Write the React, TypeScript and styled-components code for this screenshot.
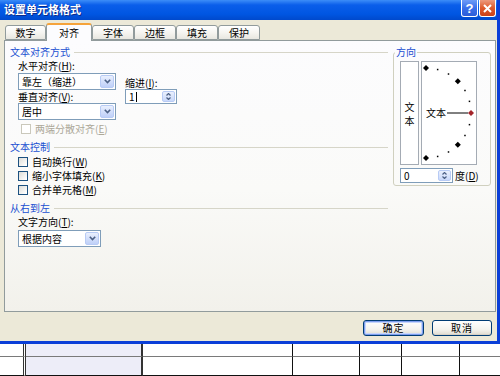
import React from "react";
import styled, { createGlobalStyle } from "styled-components";

const GlobalStyle = createGlobalStyle`
  html, body { margin: 0; padding: 0; width: 500px; height: 376px; overflow: hidden; background: #fff; }
  body { font-family: "Noto Sans CJK SC", "Liberation Sans", sans-serif; font-size: 10px; color: #000; }
  * { box-sizing: border-box; }
  u { text-decoration: underline; }
`;

const Screen = styled.div`
  width: 500px;
  height: 376px;
  display: flex;
  flex-direction: column;
  overflow: hidden;
`;

const Window = styled.div`
  height: 344px;
  display: flex;
  flex-direction: column;
  border-right: 3px solid #0B3FD8;
  border-bottom: 3px solid #0B3FD8;
  background: #ECE9D8;
`;

const TitleBar = styled.div`
  height: 20px;
  flex: 0 0 20px;
  display: flex;
  align-items: flex-start;
  justify-content: space-between;
  padding: 0 1px 0 4px;
  background: linear-gradient(180deg, #3C8DF8 0%, #0A5EEA 25%, #0056E2 70%, #0049CC 100%);
`;

const Title = styled.span`
  color: #fff;
  font-weight: bold;
  font-size: 11px;
  line-height: 12px;
  margin-top: 3px;
  text-shadow: 1px 1px 0 #0A2A8A;
`;

const TitleButtons = styled.div`
  display: flex;
  gap: 1px;
`;

const CaptionButton = styled.div<{ $kind: "help" | "close" }>`
  width: 17px;
  height: 17px;
  border: 1px solid #fff;
  border-top: none;
  border-radius: 0 0 3px 3px;
  display: flex;
  align-items: center;
  justify-content: center;
  color: #fff;
  font-family: "Liberation Sans", sans-serif;
  font-weight: bold;
  font-size: 13px;
  background: ${(p) =>
    p.$kind === "help"
      ? "linear-gradient(180deg, #6E9CF8 0%, #3A6FEA 50%, #2A5CD8 100%)"
      : "linear-gradient(180deg, #EC9A7E 0%, #DF5A2C 50%, #C9421A 100%)"};
`;

const Body = styled.div`
  flex: 1;
  display: flex;
  flex-direction: column;
  padding: 3px 1px 5px 4px;
`;

const TabRow = styled.div`
  display: flex;
  align-items: flex-end;
  height: 17px;
  padding-left: 1px;
  position: relative;
  z-index: 1;
`;

const Tab = styled.div<{ $active?: boolean; $w: number }>`
  width: ${(p) => p.$w}px;
  height: ${(p) => (p.$active ? 18 : 15)}px;
  margin-bottom: ${(p) => (p.$active ? -1 : 0)}px;
  border: 1px solid #919B9C;
  border-bottom: ${(p) => (p.$active ? "none" : "1px solid #919B9C")};
  border-top: ${(p) => (p.$active ? "2px solid #F5A33A" : "1px solid #919B9C")};
  border-radius: 3px 3px 0 0;
  background: ${(p) =>
    p.$active ? "#FCFCFE" : "linear-gradient(180deg, #FFFFFF 0%, #F6F5F1 50%, #E8E7E0 100%)"};
  display: flex;
  align-items: center;
  justify-content: center;
  line-height: 12px;
  font-size: 10px;
`;

const Panel = styled.div`
  height: 272px;
  border: 1px solid #919B9C;
  background: linear-gradient(180deg, #FCFCFE 0%, #FAFAF8 55%, #F2F1EB 100%);
  display: flex;
  align-items: flex-start;
  padding: 5px 4px 0 5px;
`;

const LeftCol = styled.div`
  flex: 0 0 378px;
  margin-right: 5px;
  display: flex;
  flex-direction: column;
`;

const SectionHeader = styled.div<{ $mt?: number }>`
  display: flex;
  align-items: center;
  height: 12px;
  line-height: 12px;
  color: #1A4FD1;
  margin-top: ${(p) => p.$mt ?? 0}px;
  &::after {
    content: "";
    flex: 1;
    height: 1px;
    background: #D6D5C8;
    margin-left: 4px;
  }
`;

const Label = styled.div<{ $mt?: number }>`
  height: 12px;
  line-height: 12px;
  margin-top: ${(p) => p.$mt ?? 0}px;
  white-space: nowrap;
`;

const AlignRow = styled.div`
  display: flex;
  gap: 9px;
  margin-left: 8px;
  margin-top: 2px;
`;

const Column = styled.div<{ $pt?: number }>`
  display: flex;
  flex-direction: column;
  padding-top: ${(p) => p.$pt ?? 0}px;
`;

const SelectBox = styled.div<{ $w: number; $mt?: number }>`
  width: ${(p) => p.$w}px;
  height: 17px;
  margin-top: ${(p) => p.$mt ?? 0}px;
  border: 1px solid #7F9DB9;
  background: #fff;
  display: flex;
  align-items: center;
  padding: 0 1px 0 3px;
`;

const FieldText = styled.span`
  flex: 1;
  line-height: 13px;
  white-space: nowrap;
  display: flex;
  align-items: center;
`;

const DropBtn = styled.span`
  width: 14px;
  height: 13px;
  border: 1px solid #B8CBF5;
  border-radius: 2px;
  background: linear-gradient(180deg, #EAF0FD 0%, #D3DFFB 50%, #BFD0F8 100%);
  display: flex;
  align-items: center;
  justify-content: center;
`;

const SpinBox = styled.div<{ $w: number }>`
  width: ${(p) => p.$w}px;
  height: 15px;
  border: 1px solid #7F9DB9;
  background: #fff;
  display: flex;
  align-items: center;
  padding: 0 1px 0 3px;
`;

const SpinBtn = styled.span`
  width: 13px;
  height: 11px;
  border: 1px solid #B8CBF5;
  border-radius: 2px;
  background: linear-gradient(180deg, #EAF0FD 0%, #C9D8FA 100%);
  display: flex;
  flex-direction: column;
  align-items: center;
  justify-content: center;
  gap: 1px;
`;

const Caret = styled.span`
  display: inline-block;
  width: 1px;
  height: 10px;
  background: #000;
  margin-left: 1px;
`;

const CheckRow = styled.div<{ $ml?: number; $mt?: number; $h?: number; $disabled?: boolean }>`
  display: flex;
  align-items: center;
  height: ${(p) => p.$h ?? 14}px;
  margin-left: ${(p) => p.$ml ?? 8}px;
  margin-top: ${(p) => p.$mt ?? 0}px;
  gap: 4px;
  color: ${(p) => (p.$disabled ? "#ACA899" : "#000")};
  line-height: 12px;
  white-space: nowrap;
`;

const CheckBox = styled.span<{ $disabled?: boolean }>`
  width: 10px;
  height: 10px;
  border: 1px solid ${(p) => (p.$disabled ? "#CAC8BB" : "#1C5180")};
  background: ${(p) => (p.$disabled ? "#fff" : "linear-gradient(135deg, #DCDCD6 0%, #FFFFFF 90%)")};
`;

const Indented = styled.div`
  margin-left: 8px;
  display: flex;
  flex-direction: column;
`;

const Group = styled.fieldset`
  flex: 0 0 98px;
  margin: 0;
  padding: 0;
  border: 1px solid #D0D0BF;
  border-radius: 3px;
  min-width: 0;
`;

const Legend = styled.legend`
  margin-left: 1px;
  padding: 0 1px;
  color: #1A4FD1;
  line-height: 12px;
  height: 12px;
`;

const GroupInner = styled.div`
  padding: 3px 0 3px 6px;
  display: flex;
  flex-direction: column;
`;

const DirBoxes = styled.div`
  display: flex;
  gap: 2px;
  height: 104px;
`;

const VertBox = styled.div`
  width: 19px;
  height: 104px;
  border: 1px solid #A4ABB4;
  background: #fff;
  display: flex;
  flex-direction: column;
  align-items: center;
  justify-content: center;
  padding-top: 2px;
`;

const VertChar = styled.span`
  display: block;
  height: 14px;
  line-height: 14px;
`;

const DialBox = styled.div`
  width: 56px;
  height: 104px;
  border: 1px solid #A4ABB4;
  background: #fff;
  display: flex;
`;

const DegreeRow = styled.div`
  display: flex;
  align-items: center;
  gap: 2px;
  margin-top: 3px;
  height: 14px;
  white-space: nowrap;
`;

const ButtonRow = styled.div`
  display: flex;
  justify-content: flex-end;
  gap: 8px;
  margin-top: 8px;
  padding-right: 4px;
`;

const DlgButton = styled.div<{ $w: number; $default?: boolean }>`
  width: ${(p) => p.$w}px;
  height: 16px;
  border: 1px solid #003C74;
  border-radius: 3px;
  background: linear-gradient(180deg, #FFFFFF 0%, #F4F3EE 60%, #DEDBD0 100%);
  box-shadow: ${(p) => (p.$default ? "inset 0 0 0 1px #7E9EEF, inset 0 0 0 2px #C6D6FB" : "inset 0 -1px 0 #D6D0C5")};
  display: flex;
  align-items: center;
  justify-content: center;
  line-height: 12px;
  letter-spacing: 1px;
`;

const Sheet = styled.div`
  flex: 1;
  display: grid;
  grid-template-columns: 26px 117px 150px 67px 42px 58px 1fr;
  grid-template-rows: 13px 19px;
  background: #fff;
`;

const Cell = styled.div<{ $col: number; $row: number }>`
  background: ${(p) => (p.$col === 1 ? "#EDEDF8" : "#fff")};
  border-right: ${(p) =>
    p.$col === 0 ? "3px double #333" : p.$col === 1 ? "2px solid #333" : p.$col === 6 ? "none" : "1px solid #111"};
  border-bottom: ${(p) => (p.$row === 0 ? "1px solid #7A7A7A" : "1px solid #111")};
`;

const Chevron = () => (
  <svg width="7" height="5" viewBox="0 0 7 5">
    <path d="M0.8 0.8 L3.5 3.6 L6.2 0.8" fill="none" stroke="#4D6185" strokeWidth="1.6" />
  </svg>
);

const SpinArrows = () => (
  <>
    <svg width="5" height="3" viewBox="0 0 5 3">
      <path d="M0.5 2.5 L2.5 0.5 L4.5 2.5" fill="none" stroke="#4D6185" strokeWidth="1.2" />
    </svg>
    <svg width="5" height="3" viewBox="0 0 5 3">
      <path d="M0.5 0.5 L2.5 2.5 L4.5 0.5" fill="none" stroke="#4D6185" strokeWidth="1.2" />
    </svg>
  </>
);

const Dial = () => {
  const cx = 4;
  const cy = 51;
  const R = 45;
  const marks: React.ReactNode[] = [];
  for (let a = 90; a >= -90; a -= 15) {
    const rad = (a * Math.PI) / 180;
    const x = cx + R * Math.cos(rad);
    const y = cy - R * Math.sin(rad);
    if (a === 0) {
      marks.push(
        <polygon key={a} points={`${x},${y - 3} ${x + 3},${y} ${x},${y + 3} ${x - 3},${y}`} fill="#A3242A" />
      );
    } else if (a % 45 === 0) {
      marks.push(
        <polygon key={a} points={`${x},${y - 3} ${x + 3},${y} ${x},${y + 3} ${x - 3},${y}`} fill="#000" />
      );
    } else {
      marks.push(<rect key={a} x={x - 0.75} y={y - 0.75} width="1.5" height="1.5" fill="#000" />);
    }
  }
  return (
    <svg width="54" height="102" viewBox="0 0 54 102">
      <text x="4" y="55" fontSize="10" fontFamily='"Noto Sans CJK SC", sans-serif' fill="#000">
        文本
      </text>
      <line x1="25" y1="51" x2="46" y2="51" stroke="#000" strokeWidth="1" />
      {marks}
    </svg>
  );
};

const tabs = [
  { label: "数字", w: 41 },
  { label: "对齐", w: 46, active: true },
  { label: "字体", w: 42 },
  { label: "边框", w: 42 },
  { label: "填充", w: 42 },
  { label: "保护", w: 42 },
];

export default function App() {
  return (
    <Screen>
      <GlobalStyle />
      <Window>
        <TitleBar>
          <Title>设置单元格格式</Title>
          <TitleButtons>
            <CaptionButton $kind="help">?</CaptionButton>
            <CaptionButton $kind="close">
              <svg width="9" height="9" viewBox="0 0 9 9">
                <path d="M1 1 L8 8 M8 1 L1 8" stroke="#fff" strokeWidth="2" />
              </svg>
            </CaptionButton>
          </TitleButtons>
        </TitleBar>
        <Body>
          <TabRow>
            {tabs.map((t) => (
              <Tab key={t.label} $w={t.w} $active={t.active}>
                {t.label}
              </Tab>
            ))}
          </TabRow>
          <Panel>
            <LeftCol>
              <SectionHeader>文本对齐方式</SectionHeader>
              <AlignRow>
                <Column>
                  <Label>
                    水平对齐(<u>H</u>):
                  </Label>
                  <SelectBox $w={98} $mt={1}>
                    <FieldText>靠左（缩进）</FieldText>
                    <DropBtn>
                      <Chevron />
                    </DropBtn>
                  </SelectBox>
                  <Label $mt={1}>
                    垂直对齐(<u>V</u>):
                  </Label>
                  <SelectBox $w={98}>
                    <FieldText>居中</FieldText>
                    <DropBtn>
                      <Chevron />
                    </DropBtn>
                  </SelectBox>
                </Column>
                <Column $pt={17}>
                  <Label>
                    缩进(<u>I</u>):
                  </Label>
                  <SpinBox $w={52}>
                    <FieldText>
                      1<Caret />
                    </FieldText>
                    <SpinBtn>
                      <SpinArrows />
                    </SpinBtn>
                  </SpinBox>
                </Column>
              </AlignRow>
              <CheckRow $ml={11} $mt={3} $h={12} $disabled>
                <CheckBox $disabled />
                <span>
                  两端分散对齐(<u>E</u>)
                </span>
              </CheckRow>
              <SectionHeader $mt={6}>文本控制</SectionHeader>
              <CheckRow $mt={2}>
                <CheckBox />
                <span>
                  自动换行(<u>W</u>)
                </span>
              </CheckRow>
              <CheckRow>
                <CheckBox />
                <span>
                  缩小字体填充(<u>K</u>)
                </span>
              </CheckRow>
              <CheckRow>
                <CheckBox />
                <span>
                  合并单元格(<u>M</u>)
                </span>
              </CheckRow>
              <SectionHeader $mt={5}>从右到左</SectionHeader>
              <Indented>
                <Label $mt={2}>
                  文字方向(<u>T</u>):
                </Label>
                <SelectBox $w={83} $mt={2}>
                  <FieldText>根据内容</FieldText>
                  <DropBtn>
                    <Chevron />
                  </DropBtn>
                </SelectBox>
              </Indented>
            </LeftCol>
            <Group>
              <Legend>方向</Legend>
              <GroupInner>
                <DirBoxes>
                  <VertBox>
                    <VertChar>文</VertChar>
                    <VertChar>本</VertChar>
                  </VertBox>
                  <DialBox>
                    <Dial />
                  </DialBox>
                </DirBoxes>
                <DegreeRow>
                  <SpinBox $w={53}>
                    <FieldText>0</FieldText>
                    <SpinBtn>
                      <SpinArrows />
                    </SpinBtn>
                  </SpinBox>
                  <span>
                    度(<u>D</u>)
                  </span>
                </DegreeRow>
              </GroupInner>
            </Group>
          </Panel>
          <ButtonRow>
            <DlgButton $w={61} $default>
              确定
            </DlgButton>
            <DlgButton $w={60}>取消</DlgButton>
          </ButtonRow>
        </Body>
      </Window>
      <Sheet>
        {[0, 1].map((r) =>
          [0, 1, 2, 3, 4, 5, 6].map((c) => <Cell key={`${r}-${c}`} $row={r} $col={c} />)
        )}
      </Sheet>
    </Screen>
  );
}
